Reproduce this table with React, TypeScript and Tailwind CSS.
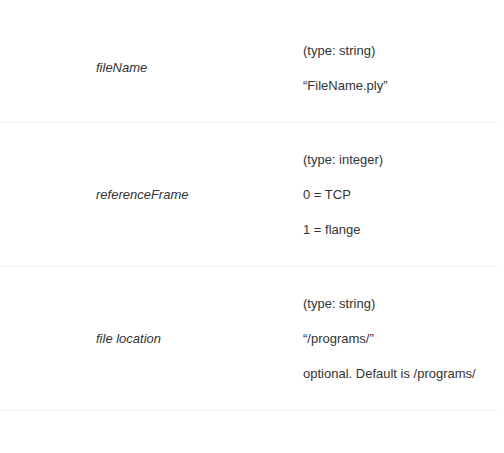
const rows = [
  { name: "fileName", lines: ["(type: string)", "\u201cFileName.ply\u201d"] },
  { name: "referenceFrame", lines: ["(type: integer)", "0 = TCP", "1 = flange"] },
  { name: "file location", lines: ["(type: string)", "\u201c/programs/\u201d", "optional. Default is /programs/"] },
]

export default function App() {
  return (
    <div
      className="min-h-screen bg-white pt-[14px] pr-[6px] text-[13px] leading-[20px] text-[#333]"
      style={{ fontFamily: '"Liberation Sans", Arial, sans-serif' }}
    >
      {rows.map((row) => (
        <div key={row.name} className="flex items-center border-b border-[#eeeeee]">
          <div className="w-[303px] pl-[96px] italic">{row.name}</div>
          <div className="flex flex-1 flex-col gap-[15px] pt-[27px] pb-[26px]">
            {row.lines.map((l) => (
              <p key={l}>{l}</p>
            ))}
          </div>
        </div>
      ))}
    </div>
  )
}
